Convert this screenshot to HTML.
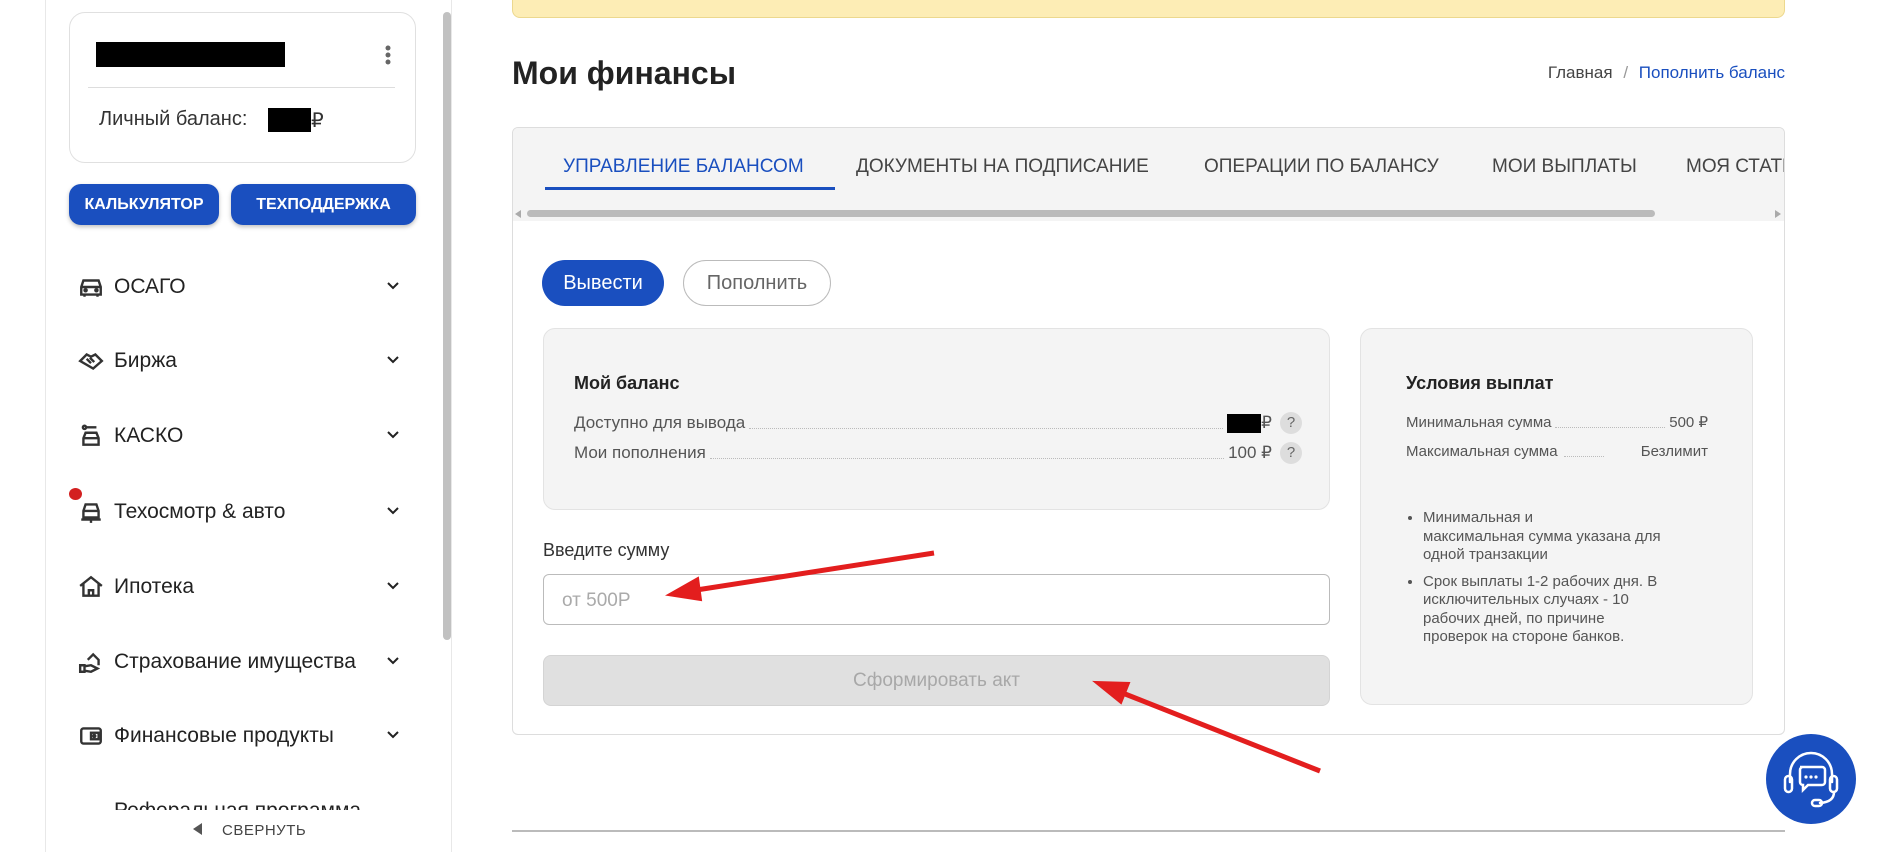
<!DOCTYPE html>
<html><head><meta charset="utf-8"><style>
*{box-sizing:border-box;margin:0;padding:0}
body{width:1890px;height:852px;overflow:hidden;background:#fff;font-family:"Liberation Sans","Noto Sans CJK SC",sans-serif;position:relative;color:#222}
.a{position:absolute}
.side{left:45px;top:0;width:407px;height:852px;border-left:1px solid #e8e8e8;border-right:1px solid #e8e8e8}
.card{left:69px;top:12px;width:347px;height:151px;border:1px solid #e0e0e0;border-radius:16px}
.btn{background:#1a4fbf;color:#fff;font-weight:bold;font-size:16px;border-radius:12px;display:flex;align-items:center;justify-content:center;box-shadow:0 2px 4px rgba(0,0,0,.25)}
.mi{left:78px;width:330px;height:30px;display:flex;align-items:center;font-size:21px;color:#222}
.mi svg.ic{width:26px;height:26px;margin-right:10px}
.mi .ch{position:absolute;right:8px;top:9px}
.tab{top:156px;font-size:19px;color:#444;white-space:nowrap}
.row{display:flex;align-items:center;font-size:17px;color:#555}
.row .d{flex:1;border-bottom:1px dotted #bbb;margin:10px 4px 0}
.q{display:inline-block;width:22px;height:22px;border-radius:50%;background:#ddd;color:#666;font-size:15px;text-align:center;line-height:22px;margin-left:8px}
</style></head><body>
<div class="a side"></div>
<div class="a" style="left:443px;top:12px;width:8px;height:628px;background:#c1c1c1;border-radius:4px"></div>
<div class="a card"></div>
<div class="a" style="left:96px;top:42px;width:189px;height:25px;background:#000"></div>
<svg class="a" style="left:383px;top:44px" width="10" height="24"><circle cx="5" cy="4" r="2.5" fill="#666"/><circle cx="5" cy="11" r="2.5" fill="#666"/><circle cx="5" cy="18" r="2.5" fill="#666"/></svg>
<div class="a" style="left:88px;top:87px;width:307px;height:1px;background:#ddd"></div>
<div class="a" style="left:99px;top:108px;font-size:20px;color:#333">Личный баланс:</div>
<div class="a" style="left:268px;top:108px;width:43px;height:24px;background:#000"></div>
<div class="a" style="left:311px;top:108px;font-size:20px;color:#333">₽</div>
<div class="a btn" style="left:69px;top:184px;width:150px;height:41px">КАЛЬКУЛЯТОР</div>
<div class="a btn" style="left:231px;top:184px;width:185px;height:41px">ТЕХПОДДЕРЖКА</div>

<div class="a mi" style="top:272px"><svg class="ic" viewBox="0 0 24 24" fill="none" stroke="#333" stroke-width="2.2"><path d="M3 12l2-6h14l2 6v7H3z M3 12h18 M6 19v2 M18 19v2"/><circle cx="7" cy="15" r="1" fill="#333"/><circle cx="17" cy="15" r="1" fill="#333"/></svg>ОСАГО<svg class="ch" width="14" height="10"><path d="M2 2l5 5 5-5" stroke="#222" stroke-width="2" fill="none"/></svg></div>
<div class="a mi" style="top:346px"><svg class="ic" viewBox="0 0 24 24" fill="none" stroke="#333" stroke-width="2.2"><path d="M2 12l6-6 4 2 4-2 6 6-8 7z M8 10l4 4 M11 9l4 4"/></svg>Биржа<svg class="ch" width="14" height="10"><path d="M2 2l5 5 5-5" stroke="#222" stroke-width="2" fill="none"/></svg></div>
<div class="a mi" style="top:421px"><svg class="ic" viewBox="0 0 24 24" fill="none" stroke="#333" stroke-width="2.2"><path d="M5 14l2-5h10l2 5v6H5z M5 14h14 M7 4h10"/><circle cx="6" cy="4" r="1.5"/></svg>КАСКО<svg class="ch" width="14" height="10"><path d="M2 2l5 5 5-5" stroke="#222" stroke-width="2" fill="none"/></svg></div>
<div class="a" style="left:69px;top:488px;width:13px;height:12px;border-radius:50%;background:#d32020"></div>
<div class="a mi" style="top:497px"><svg class="ic" viewBox="0 0 24 24" fill="none" stroke="#333" stroke-width="2.2"><path d="M5 11l2-6h10l2 6v6H5z M5 11h14 M3 19h18 M12 19v3"/></svg>Техосмотр &amp; авто<svg class="ch" width="14" height="10"><path d="M2 2l5 5 5-5" stroke="#222" stroke-width="2" fill="none"/></svg></div>
<div class="a mi" style="top:572px"><svg class="ic" viewBox="0 0 24 24" fill="none" stroke="#333" stroke-width="2.2"><path d="M2 11l10-8 10 8 M5 9v11h14V9 M10 20v-5h4v5"/></svg>Ипотека<svg class="ch" width="14" height="10"><path d="M2 2l5 5 5-5" stroke="#222" stroke-width="2" fill="none"/></svg></div>
<div class="a mi" style="top:647px"><svg class="ic" viewBox="0 0 24 24" fill="none" stroke="#333" stroke-width="2.2"><path d="M2 15h4v6H2z M6 16l6-1 6 3-6 3-6-1 M9 10l5-5 5 5v5"/></svg>Страхование имущества<svg class="ch" width="14" height="10"><path d="M2 2l5 5 5-5" stroke="#222" stroke-width="2" fill="none"/></svg></div>
<div class="a mi" style="top:721px"><svg class="ic" viewBox="0 0 24 24" fill="none" stroke="#333" stroke-width="2.2"><rect x="3" y="5" width="18" height="14" rx="2"/><rect x="12" y="9" width="7" height="6"/><circle cx="15" cy="12" r="1" fill="#333"/></svg>Финансовые продукты<svg class="ch" width="14" height="10"><path d="M2 2l5 5 5-5" stroke="#222" stroke-width="2" fill="none"/></svg></div>
<div class="a" style="left:78px;top:796px;width:330px;height:14px;overflow:hidden"><div style="font-size:21px;color:#222;padding-left:36px;line-height:30px">Реферальная программа</div></div>
<svg class="a" style="left:193px;top:823px" width="10" height="12"><path d="M9 0v12L0 6z" fill="#555"/></svg>
<div class="a" style="left:222px;top:822px;font-size:15px;color:#444;letter-spacing:.5px">СВЕРНУТЬ</div>

<div class="a" style="left:512px;top:-5px;width:1273px;height:23px;background:#fdedb5;border:1px solid #ecd88e;border-radius:0 0 8px 8px"></div>
<div class="a" style="left:512px;top:55px;font-size:32px;font-weight:bold;color:#222">Мои финансы</div>
<div class="a" style="right:105px;top:63px;font-size:17px;color:#444">Главная <span style="color:#999;margin:0 6px">/</span> <span style="color:#1a4fbf">Пополнить баланс</span></div>

<div class="a" style="left:512px;top:127px;width:1273px;height:608px;border:1px solid #ddd;border-radius:6px;overflow:hidden">
<div style="height:93px;background:#f4f4f4"></div></div>
<div class="a tab" style="left:563px;color:#1a4fbf">УПРАВЛЕНИЕ БАЛАНСОМ</div>
<div class="a" style="left:545px;top:187px;width:290px;height:3px;background:#1a4fbf"></div>
<div class="a tab" style="left:856px">ДОКУМЕНТЫ НА ПОДПИСАНИЕ</div>
<div class="a tab" style="left:1204px">ОПЕРАЦИИ ПО БАЛАНСУ</div>
<div class="a tab" style="left:1492px">МОИ ВЫПЛАТЫ</div>
<div class="a" style="left:1686px;top:156px;width:98px;overflow:hidden"><div class="tab" style="font-size:19px;color:#444;white-space:nowrap">МОЯ СТАТИСТИКА</div></div>
<div class="a" style="left:527px;top:210px;width:1128px;height:7px;background:#bbb;border-radius:4px"></div>
<svg class="a" style="left:515px;top:210px" width="6" height="8"><path d="M6 0v8L0 4z" fill="#aaa"/></svg>
<svg class="a" style="left:1775px;top:210px" width="6" height="8"><path d="M0 0v8l6-4z" fill="#aaa"/></svg>

<div class="a" style="left:542px;top:260px;width:122px;height:46px;background:#1a4fbf;border-radius:23px;color:#fff;font-size:20px;display:flex;align-items:center;justify-content:center">Вывести</div>
<div class="a" style="left:683px;top:260px;width:148px;height:46px;border:1px solid #bbb;border-radius:23px;color:#666;font-size:20px;display:flex;align-items:center;justify-content:center">Пополнить</div>

<div class="a" style="left:543px;top:328px;width:787px;height:182px;background:#f4f4f4;border:1px solid #e3e3e3;border-radius:12px"></div>
<div class="a" style="left:574px;top:373px;font-size:18px;font-weight:bold">Мой баланс</div>
<div class="a row" style="left:574px;top:412px;width:728px"><span>Доступно для вывода</span><span class="d"></span><span style="display:inline-block;width:34px;height:19px;background:#000"></span>₽<span class="q">?</span></div>
<div class="a row" style="left:574px;top:442px;width:728px"><span>Мои пополнения</span><span class="d"></span><span>100 ₽</span><span class="q">?</span></div>
<div class="a" style="left:543px;top:540px;font-size:18px;color:#333">Введите сумму</div>
<div class="a" style="left:543px;top:574px;width:787px;height:51px;border:1px solid #bbb;border-radius:6px;font-size:19px;color:#aaa;padding:15px 18px">от 500Р</div>
<div class="a" style="left:543px;top:655px;width:787px;height:51px;background:#e0e0e0;border:1px solid #d4d4d4;border-radius:8px;font-size:19px;color:#a8a8a8;display:flex;align-items:center;justify-content:center">Сформировать акт</div>

<div class="a" style="left:1360px;top:328px;width:393px;height:377px;background:#f4f4f4;border:1px solid #e3e3e3;border-radius:12px"></div>
<div class="a" style="left:1406px;top:373px;font-size:18px;font-weight:bold">Условия выплат</div>
<div class="a row" style="left:1406px;top:413px;width:302px;font-size:15px"><span>Минимальная сумма</span><span class="d"></span><span>500 ₽</span></div>
<div class="a row" style="left:1406px;top:443px;width:302px;font-size:15px"><span>Максимальная сумма</span><span class="d" style="flex:0 0 40px;margin:10px 6px 0"></span><span style="margin-left:auto">Безлимит</span></div>
<ul class="a" style="left:1423px;top:509px;width:238px;font-size:15px;color:#555;line-height:18.5px;padding-left:0;list-style:disc">
<li style="margin-bottom:8px">Минимальная и<br>максимальная сумма указана для одной транзакции</li>
<li>Срок выплаты 1-2 рабочих дня. В исключительных случаях - 10 рабочих дней, по причине проверок на стороне банков.</li></ul>

<div class="a" style="left:512px;top:830px;width:1273px;height:2px;background:#bbb"></div>

<svg class="a" style="left:0;top:0" width="1890" height="852">
<g stroke="#e31e1e" stroke-width="5" fill="#e31e1e">
<line x1="934" y1="553" x2="690" y2="591"/><path d="M668 595l30-17 3 22z" stroke-width="2"/>
<line x1="1320" y1="771" x2="1115" y2="690"/><path d="M1095 682l34 1-8 20z" stroke-width="2"/>
</g>
<circle cx="1811" cy="779" r="45" fill="#1a4fbf"/>
<g stroke="#fff" stroke-width="2.5" fill="none" stroke-linecap="round">
<path d="M1790 782v-8a21 21 0 0 1 42 0v8"/>
<rect x="1785" y="776" width="7" height="16" rx="3.5"/><rect x="1830" y="776" width="7" height="16" rx="3.5"/>
<path d="M1834 792q0 10-14 11"/><rect x="1812" y="800" width="10" height="6" rx="3"/>
<path d="M1800 767h22a3 3 0 0 1 3 3v12a3 3 0 0 1-3 3h-14l-5 5v-5a3 3 0 0 1-3-3v-12a3 3 0 0 1 3-3z"/>
</g>
<g fill="#fff"><circle cx="1806" cy="777" r="1.6"/><circle cx="1811" cy="777" r="1.6"/><circle cx="1816" cy="777" r="1.6"/></g>
</svg>
</body></html>
